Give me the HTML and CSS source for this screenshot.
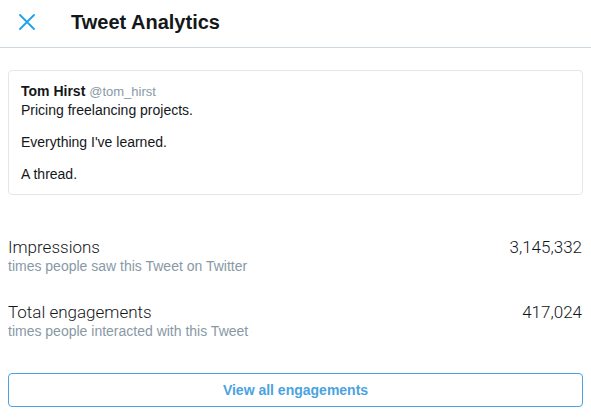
FILE: index.html
```html
<!DOCTYPE html>
<html lang="en">
<head>
    <meta charset="UTF-8">
    <meta name="viewport" content="width=device-width, initial-scale=1.0">
    <title>Tweet Analytics</title>
    <link rel="stylesheet" href="styles.css">
</head>
<body>
    <div class="header">
        <svg class="close" viewBox="0 0 16 16" width="16" height="16">
            <path d="M1 1 L15 15 M15 1 L1 15" stroke="#1da1f2" stroke-width="1.8" fill="none" stroke-linecap="round"/>
        </svg>
        <h1>Tweet Analytics</h1>
    </div>

    <div class="content">
        <div class="tweet">
            <div class="author"><b>Tom Hirst</b> <span class="handle">@tom_hirst</span></div>
            <p>Pricing freelancing projects.</p>
            <p>Everything I've learned.</p>
            <p>A thread.</p>
        </div>

        <div class="stats">
            <div class="stat">
                <div>
                    <div class="stat-name">Impressions</div>
                    <div class="stat-desc">times people saw this Tweet on Twitter</div>
                </div>
                <div class="stat-num">3,145,332</div>
            </div>

            <div class="stat">
                <div>
                    <div class="stat-name">Total engagements</div>
                    <div class="stat-desc">times people interacted with this Tweet</div>
                </div>
                <div class="stat-num">417,024</div>
            </div>
        </div>

        <button class="view-all">View all engagements</button>
    </div>
</body>
</html>
```

FILE: styles.css
```css
body {
    margin: 0;
    font-family: "Liberation Sans", Arial, sans-serif;
    color: #14171a;
    background: #fff;
}
.header {
    display: flex;
    align-items: center;
    height: 47px;
    border-bottom: 1px solid #ccd6dd;
    padding-left: 19px;
}
.close {
    display: block;
    margin-top: -3px;
}
.header h1 {
    margin: -3px 0 0 36px;
    font-size: 20px;
    font-weight: bold;
    color: #14171a;
}
.content {
    padding: 22px 8px 0 8px;
}
.tweet {
    border: 1px solid #e1e8ed;
    border-radius: 4px;
    padding: 11px 12px;
    font-size: 14px;
    line-height: 18px;
}
.handle {
    color: #8899a6;
    font-size: 13px;
}
.tweet p {
    margin: 0 0 14px 0;
}
.tweet p:last-child {
    margin-bottom: 0;
}
.stats {
    display: flex;
    flex-direction: column;
    gap: 27px;
    margin-top: 42px;
}
.stat {
    display: flex;
    justify-content: space-between;
    align-items: flex-start;
}
.stat-name, .stat-num {
    font-family: Roboto, "Liberation Sans", sans-serif;
    font-size: 17px;
    line-height: 20px;
    font-weight: 300;
    color: #14171a;
}
.stat-num {
    padding-right: 1px;
}
.stat-desc {
    font-size: 14px;
    line-height: 18px;
    color: #8899a6;
}
.view-all {
    display: block;
    width: 100%;
    margin-top: 33px;
    height: 34px;
    background: #fff;
    border: 1px solid #4aa3e0;
    border-radius: 4px;
    color: #4aa3e0;
    font-family: "Liberation Sans", Arial, sans-serif;
    font-size: 14px;
    font-weight: bold;
    cursor: pointer;
}
```
